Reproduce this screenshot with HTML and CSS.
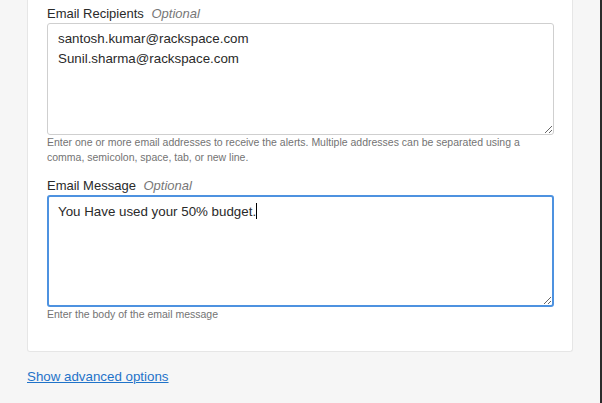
FILE: index.html
```html
<!DOCTYPE html>
<html>
<head>
<meta charset="utf-8">
<link rel="stylesheet" href="styles.css">
</head>
<body>
<div class="page">
  <div class="card">
    <div class="field">
      <label class="label">Email Recipients <span class="opt">Optional</span></label>
      <textarea class="input">santosh.kumar@rackspace.com
Sunil.sharma@rackspace.com</textarea>
      <p class="help">Enter one or more email addresses to receive the alerts. Multiple addresses can be separated using a comma, semicolon, space, tab, or new line.</p>
    </div>
    <div class="field second">
      <label class="label">Email Message <span class="opt">Optional</span></label>
      <div class="input focused">You Have used your 50% budget.<span class="caret"></span></div>
      <p class="help">Enter the body of the email message</p>
    </div>
  </div>
  <a class="adv" href="#">Show advanced options</a>
</div>
</body>
</html>
```
FILE: styles.css
```css
html, body {
  margin: 0;
  padding: 0;
  height: 100%;
}
body {
  background: #f6f6f6;
  font-family: "Liberation Sans", Arial, sans-serif;
  color: #333;
  overflow: hidden;
  border-right: 2px solid #2b2b2b;
  box-sizing: border-box;
}
.page {
  padding-left: 27px;
}
.card {
  width: 546px;
  box-sizing: border-box;
  background: #fff;
  border: 1px solid #e6e6e6;
  border-top: none;
  border-radius: 0 0 3px 3px;
  padding: 4px 18px 29px 19px;
}
.field {
  display: flex;
  flex-direction: column;
}
.second {
  margin-top: 11px;
}
.label {
  font-size: 13px;
  line-height: 19px;
  color: #2a2a2a;
}
.opt {
  font-style: italic;
  color: #777;
  margin-left: 4px;
}
.input {
  display: block;
  width: 507px;
  height: 112px;
  box-sizing: border-box;
  border: 1px solid #cfcfcf;
  border-radius: 3px;
  padding: 5px 10px 4px;
  font-family: "Liberation Sans", Arial, sans-serif;
  font-size: 13.33px;
  line-height: 20px;
  color: #2a2a2a;
  outline: none;
  margin: 0;
  background: #fff;
}
.focused {
  border: 2px solid #4d92e0;
  padding: 5px 9px 4px;
  resize: vertical;
  overflow: auto;
}
.caret {
  display: inline-block;
  width: 1px;
  height: 16px;
  background: #000;
  vertical-align: -3px;
}
.help {
  margin: 0;
  font-size: 10.5px;
  line-height: 15px;
  color: #737373;
}
.adv {
  display: inline-block;
  margin-top: 15px;
  font-size: 13.33px;
  line-height: 20px;
  color: #1f73c9;
  text-decoration: underline;
}
```
